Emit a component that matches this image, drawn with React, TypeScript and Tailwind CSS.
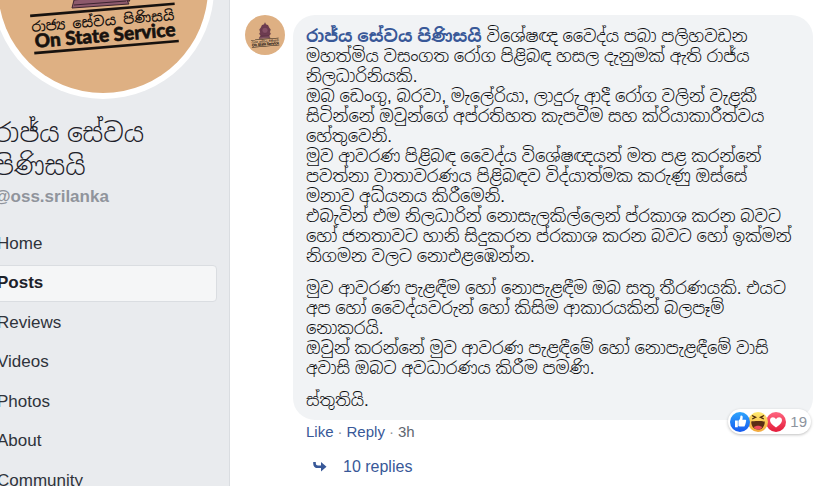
import clsx from "clsx";

const navItems = ["Home", "Posts", "Reviews", "Videos", "Photos", "About", "Community"];

const paragraphs = [
  [
    "මහත්මිය වසංගත රෝග පිළිබඳ හසල දැනුමක් ඇති රාජ්ය",
    "නිලධාරිනියකි.",
    "ඔබ ඩෙංගු, බරවා, මැලේරියා, ලාදුරු ආදී රෝග වලින් වැළකී",
    "සිටින්නේ ඔවුන්ගේ අප්රතිහත කැපවීම සහ ක්රියාකාරීත්වය",
    "හේතුවෙනි.",
    "මුව ආවරණ පිළිබඳ වෛද්ය විශේෂඥයන් මත පළ කරන්නේ",
    "පවත්නා වාතාවරණය පිළිබඳව විද්යාත්මක කරුණු ඔස්සේ",
    "මනාව අධ්යනය කිරීමෙනි.",
    "එබැවින් එම නිලධාරින් නොසැලකිල්ලෙන් ප්රකාශ කරන බවට",
    "හෝ ජනතාවට හානි සිදුකරන ප්රකාශ කරන බවට හෝ ඉක්මන්",
    "නිගමන වලට නොඑළඹෙන්න.",
  ],
  [
    "මුව ආවරණ පැළඳීම හෝ නොපැළඳීම ඔබ සතු තීරණයකි. එයට",
    "අප හෝ වෛද්යවරුන් හෝ කිසිම ආකාරයකින් බලපෑම්",
    "නොකරයි.",
    "ඔවුන් කරන්නේ මුව ආවරණ පැළඳීමේ හෝ නොපැළඳීමේ වාසි",
    "අවාසි ඔබට අවධාරණය කිරීම පමණි.",
  ],
  ["ස්තුතියි."],
];

const Emblem = ({ className }: { className: string }) => (
  <svg viewBox="0 0 210 210" className={className} aria-hidden="true">
    <circle cx="105" cy="105" r="105" fill="#deb083" />
    <g fill="#6d3b50" stroke="#3d2430" strokeWidth="1">
      <path d="M105 40l5 10 11 4 5 12 8 10-4 14 5 9-9 12H84l-9-12 5-9-4-14 8-10 5-12 11-4z" />
      <circle cx="105" cy="80" r="15" fill="#865066" />
      <path d="M80 110h46l6 8-56 4z" />
      <path d="M76 117l50-5 5 9-57 4z" fill="#8d5a6c" />
      <path d="M76 122l52-4" />
    </g>
    <g transform="rotate(-4.8 105 140)" fill="#17120f">
      <path d="M33 125.500h145v2.600H33zM34 163h145v2.600H34z" />
      <text
        x="105"
        y="143"
        textAnchor="middle"
        fontSize="14"
        fontWeight="500"
        fontFamily="Noto Sans Sinhala, Noto Sans, sans-serif"
      >
        රාජ්‍ය සේවය පිණිසයි
      </text>
      <text
        x="106"
        y="159"
        textAnchor="middle"
        fontSize="19"
        fontWeight="900"
        stroke="#17120f"
        strokeWidth="0.6"
        fontFamily="Lato, sans-serif"
      >
        On State Service
      </text>
    </g>
  </svg>
);

const LikeIcon = () => (
  <svg viewBox="0 0 20 20" className="size-5">
    <defs>
      <linearGradient id="like" x1="0" y1="0" x2="0" y2="1">
        <stop stopColor="#2fa5fc" />
        <stop offset="1" stopColor="#1559f0" />
      </linearGradient>
    </defs>
    <circle cx="10" cy="10" r="10" fill="url(#like)" />
    <path
      fill="#fff"
      d="M5 8.500h2.800v6.700H5zM8.400 8.700c1.100-.8 1.800-2 1.900-3.400 0-1.300.3-1.800 1-1.800 1 0 1.500.9 1.400 2.100 0 .8-.2 1.500-.4 2.100h2.600c.9 0 1.400.6 1.300 1.200 0 .5-.3.8-.5 1 .3.5.3 1.200-.3 1.600.3.6 0 1.200-.5 1.500.2.9-.4 1.600-1.400 1.600h-2.400c-1.200 0-1.800-.2-2.700-.7z"
    />
  </svg>
);

const HahaIcon = () => (
  <svg viewBox="0 0 20 20" className="size-5">
    <defs>
      <linearGradient id="haha" x1="0" y1="0" x2="0" y2="1">
        <stop stopColor="#ffe96f" />
        <stop offset="1" stopColor="#f3a83b" />
      </linearGradient>
    </defs>
    <circle cx="10" cy="10" r="10" fill="url(#haha)" />
    <path d="M4 3.500l3.600 1.800L4.200 7M16 3.500l-3.600 1.800L15.800 7" fill="none" stroke="#4b280e" strokeWidth="1.3" />
    <path d="M3.200 9.600c2.300-.8 11.300-.8 13.600 0 0 5-2.900 8-6.800 8s-6.800-3-6.800-8z" fill="#5a2d15" />
    <path d="M5.800 15.300c2-2 6.400-2 8.400 0-1 1.500-2.400 2.300-4.200 2.300s-3.200-.8-4.200-2.300z" fill="#ed4b5d" />
  </svg>
);

const LoveIcon = () => (
  <svg viewBox="0 0 20 20" className="size-5">
    <defs>
      <linearGradient id="love" x1="0" y1="0" x2="0" y2="1">
        <stop stopColor="#ff6680" />
        <stop offset="1" stopColor="#e31b39" />
      </linearGradient>
    </defs>
    <circle cx="10" cy="10" r="10" fill="url(#love)" />
    <path
      fill="#fff"
      d="M10 15.600C6 12.900 4 10.700 4 8.300 4 6.400 5.300 5.200 6.900 5.200c1.400 0 2.500.8 3.100 2 .6-1.200 1.700-2 3.100-2 1.600 0 2.900 1.200 2.900 3.100 0 2.400-2 4.600-6 7.300z"
    />
  </svg>
);

const Sidebar = () => (
  <aside className="w-[230px] shrink-0 overflow-hidden border-r border-[#dadde1] bg-[#e9ebee]">
    <div className="-ml-2 -mt-[123px] size-[222px] rounded-full bg-white p-[6px]">
      <Emblem className="size-full" />
    </div>
    <div className="-ml-[6px] pt-[18px]">
      <h1 className="pb-1 text-[26px] font-light leading-[33px] text-[#1d2129]">
        රාජ්ය සේවය
        <br />
        පිණිසයි
      </h1>
      <a href="#page" className="block text-[17px] font-bold leading-5 text-[#90949c]">
        @oss.srilanka
      </a>
    </div>
    <nav className="-ml-3 mr-3 mt-[18px] flex h-[274px] flex-col justify-between">
      {navItems.map((item) => (
        <a
          key={item}
          href={`#${item.toLowerCase()}`}
          className={clsx(
            "flex h-[37px] shrink-0 items-center rounded-sm border px-2 text-[17px]",
            item === "Posts"
              ? "border-[#dadde1] bg-[#f5f6f7] font-bold text-[#1d2129]"
              : "border-transparent text-[#2f333b]",
          )}
        >
          {item}
        </a>
      ))}
    </nav>
  </aside>
);

const Comment = () => (
  <article className="flex flex-1 items-start gap-2 pl-[15px] pr-[25px] pt-[15px]">
    <Emblem className="size-10 shrink-0" />
    <div className="min-w-0 flex-1">
      <div className="relative flex flex-col gap-3 whitespace-nowrap rounded-[22px] bg-[#f1f3f5] px-[13px] pb-[9px] pt-3 text-[17px] font-light leading-5 text-[#0b0c0e]">
        {paragraphs.map((lines, i) => (
          <div key={i}>
            {i === 0 && (
              <p>
                <a href="#page" className="font-bold text-[#385898]">
                  රාජ්ය සේවය පිණිසයි
                </a>{" "}
                විශේෂඥ වෛද්ය පබා පලිහවඩන
              </p>
            )}
            {lines.map((line) => (
              <p key={line}>{line}</p>
            ))}
          </div>
        ))}
        <button className="absolute -bottom-[14px] right-[2px] flex h-[25px] items-center rounded-full bg-white pl-[2px] pr-1 font-normal shadow-[0_1px_3px_rgba(0,0,0,0.25)]">
          <span className="relative z-20">
            <LikeIcon />
          </span>
          <span className="relative z-10 -ml-[2px]">
            <HahaIcon />
          </span>
          <span className="-ml-[2px]">
            <LoveIcon />
          </span>
          <span className="ml-1 text-[15px] text-[#8d949e]">19</span>
        </button>
      </div>
      <div className="flex gap-1 pl-[13px] pt-[2px] text-[15px] leading-5 text-[#385898]">
        <button>Like</button>
        <span className="text-[#90949c]">·</span>
        <button>Reply</button>
        <span className="text-[#90949c]">·</span>
        <a href="#time" className="text-[#606770]">
          3h
        </a>
      </div>
      <button className="mt-[15px] flex items-center gap-4 pl-5 text-[16px] leading-5 text-[#385898]">
        <svg viewBox="0 0 14 10" className="h-[10px] w-[14px]">
          <path d="M1.500 0v1.500Q1.500 4.800 5 4.800H10" fill="none" stroke="currentColor" strokeWidth="2.600" />
          <path d="M8 0L13.500 4.800L8 9.600z" fill="currentColor" />
        </svg>
        10 replies
      </button>
    </div>
  </article>
);

export default function App() {
  return (
    <main className="flex h-screen overflow-hidden bg-white font-['Liberation_Sans','Noto_Sans_Sinhala','Noto_Sans',sans-serif]">
      <Sidebar />
      <Comment />
    </main>
  );
}
